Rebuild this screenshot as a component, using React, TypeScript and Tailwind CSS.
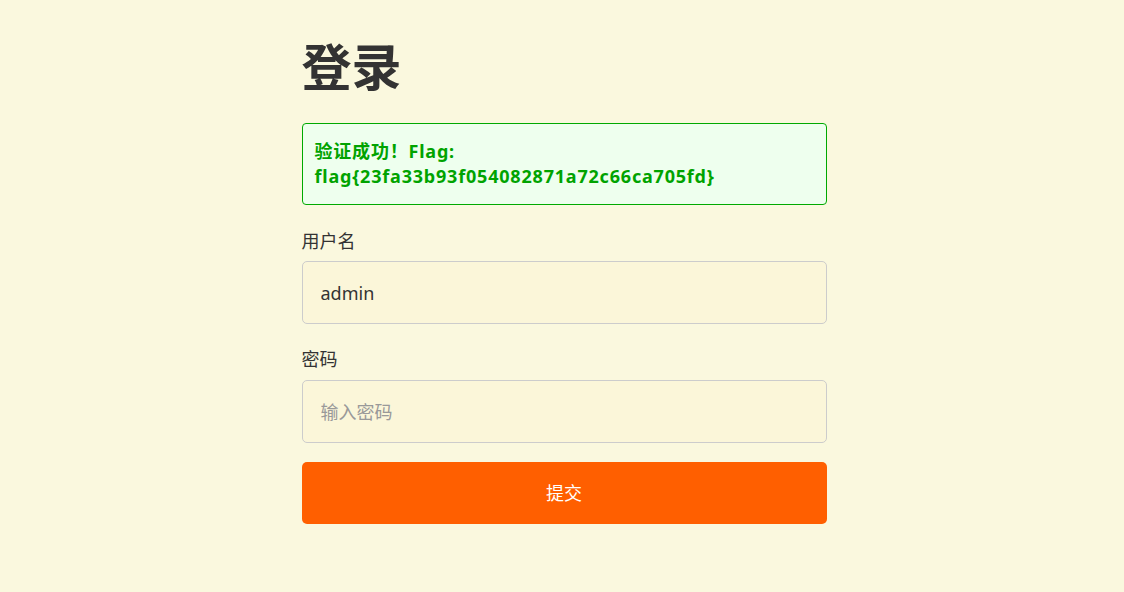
const font = "font-['Segoe_UI','Noto_Sans','Noto_Sans_CJK_SC',sans-serif]";

export default function App() {
  return (
    <div className={`min-h-[592px] bg-[#faf8de] pl-[4px] ${font} text-[#333333]`}>
      <div className="mx-auto w-[525px] pt-[34px]">
        <h1 className="text-[50px] font-bold leading-[60px] font-['Noto_Sans_CJK_SC',sans-serif]">登录</h1>

        <div className="mt-[29px] rounded border border-[#00aa00] bg-[#eeffee] px-3 py-[15px] text-[18px] font-bold leading-[25px] tracking-[0.8px] text-[#00a300]">
          验证成功！Flag: flag{"{"}23fa33b93f054082871a72c66ca705fd{"}"}
        </div>

        <form className="flex flex-col" onSubmit={(e) => e.preventDefault()}>
          <label className="mt-[23px] mb-[6px] text-[18px] leading-[27px]">用户名</label>
          <input
            defaultValue="admin"
            className="h-[63px] rounded-[5px] border border-[#cccccc] bg-[#fbf6d9] px-[18px] text-[18px] text-[#333333] outline-none"
          />

          <label className="mt-[22px] mb-[7px] text-[18px] leading-[27px]">密码</label>
          <input
            type="password"
            placeholder="输入密码"
            className="h-[63px] rounded-[5px] border border-[#cccccc] bg-[#fbf6d9] px-[18px] text-[18px] text-[#333333] outline-none placeholder:text-[#999999]"
          />

          <button
            type="submit"
            className="mt-[19px] h-[62px] rounded-[5px] bg-[#ff5f00] text-[18px] text-white"
          >
            提交
          </button>
        </form>
      </div>
    </div>
  );
}
